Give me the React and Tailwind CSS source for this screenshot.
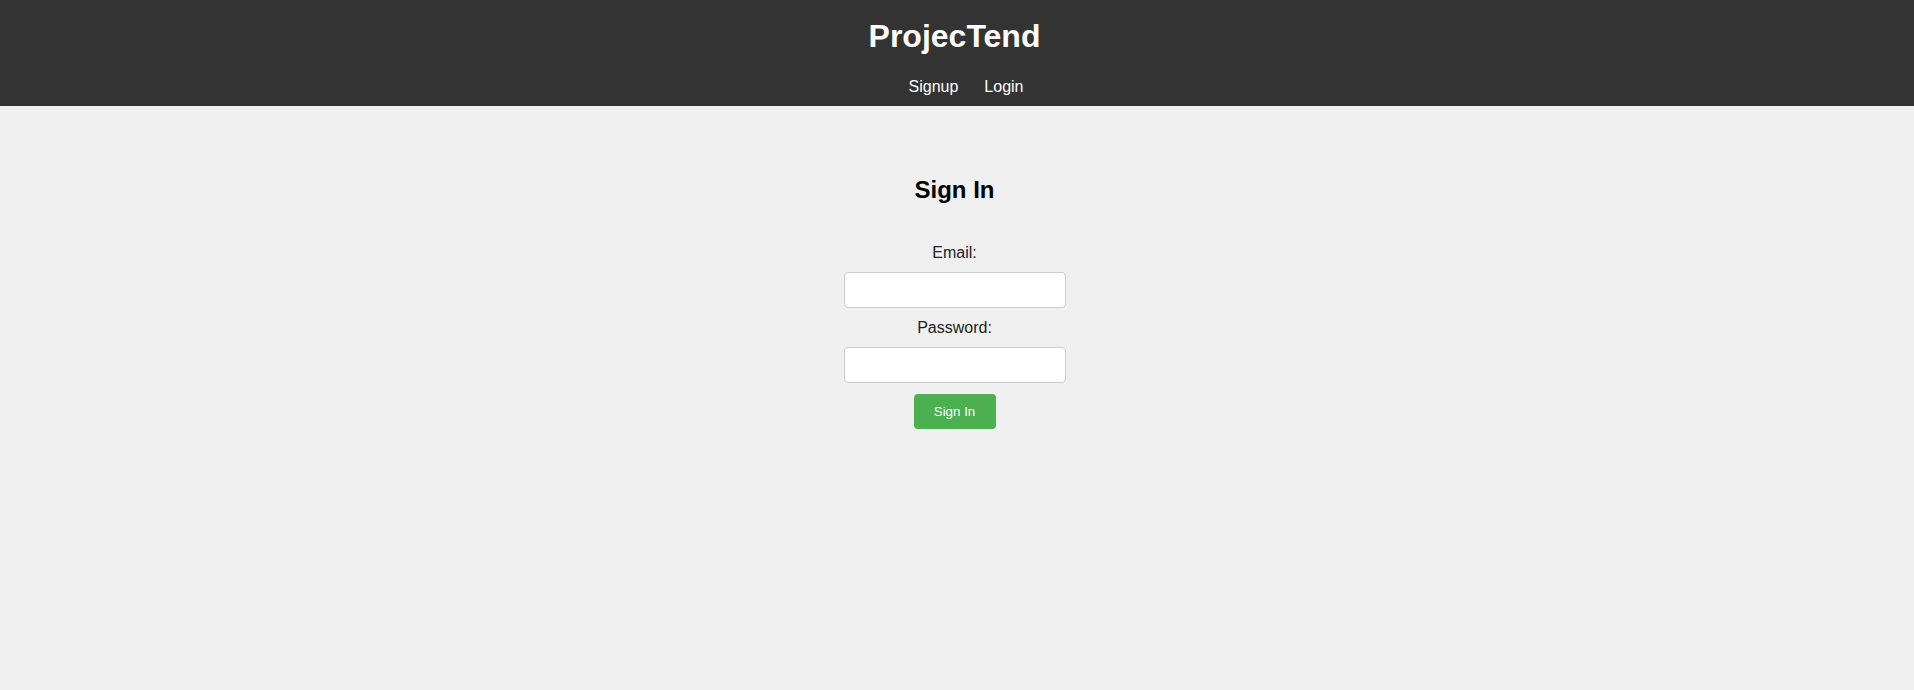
import React from 'react';

const App = () => {
  return (
    <div className="min-h-[690px] bg-[#f0f0f0] font-['Liberation_Sans',Arial,sans-serif] text-[#222]">
      <header className="bg-[#333333] text-white h-[106px] pt-[18px] pr-[5px] flex flex-col items-center">
        <h1 className="text-[32px] leading-[37px] font-bold">ProjecTend</h1>
        <nav className="mt-[23px] flex gap-[26px] text-[16px] leading-[18px] pl-[23px]">
          <a href="#" className="text-white">Signup</a>
          <a href="#" className="text-white">Login</a>
        </nav>
      </header>

      <main className="flex flex-col items-center pt-[70px] pr-[5px]">
        <h2 className="text-[24px] leading-[28px] font-bold text-black">Sign In</h2>
        <form className="mt-[39px] flex flex-col items-center" onSubmit={(e) => e.preventDefault()}>
          <label className="text-[16px] leading-[18px] pt-[1px] mb-[10px]">Email:</label>
          <input
            type="email"
            className="w-[222px] h-[36px] bg-white border border-[#cccccc] rounded-[4px] px-2 mb-[10px]"
          />
          <label className="text-[16px] leading-[18px] pt-[1px] mb-[10px]">Password:</label>
          <input
            type="password"
            className="w-[222px] h-[36px] bg-white border border-[#cccccc] rounded-[4px] px-2 mb-[11px]"
          />
          <button
            type="submit"
            className="w-[82px] h-[35px] bg-[#4caf50] text-white text-[13.33px] rounded-[4px]"
          >
            Sign In
          </button>
        </form>
      </main>
    </div>
  );
};

export default App;
